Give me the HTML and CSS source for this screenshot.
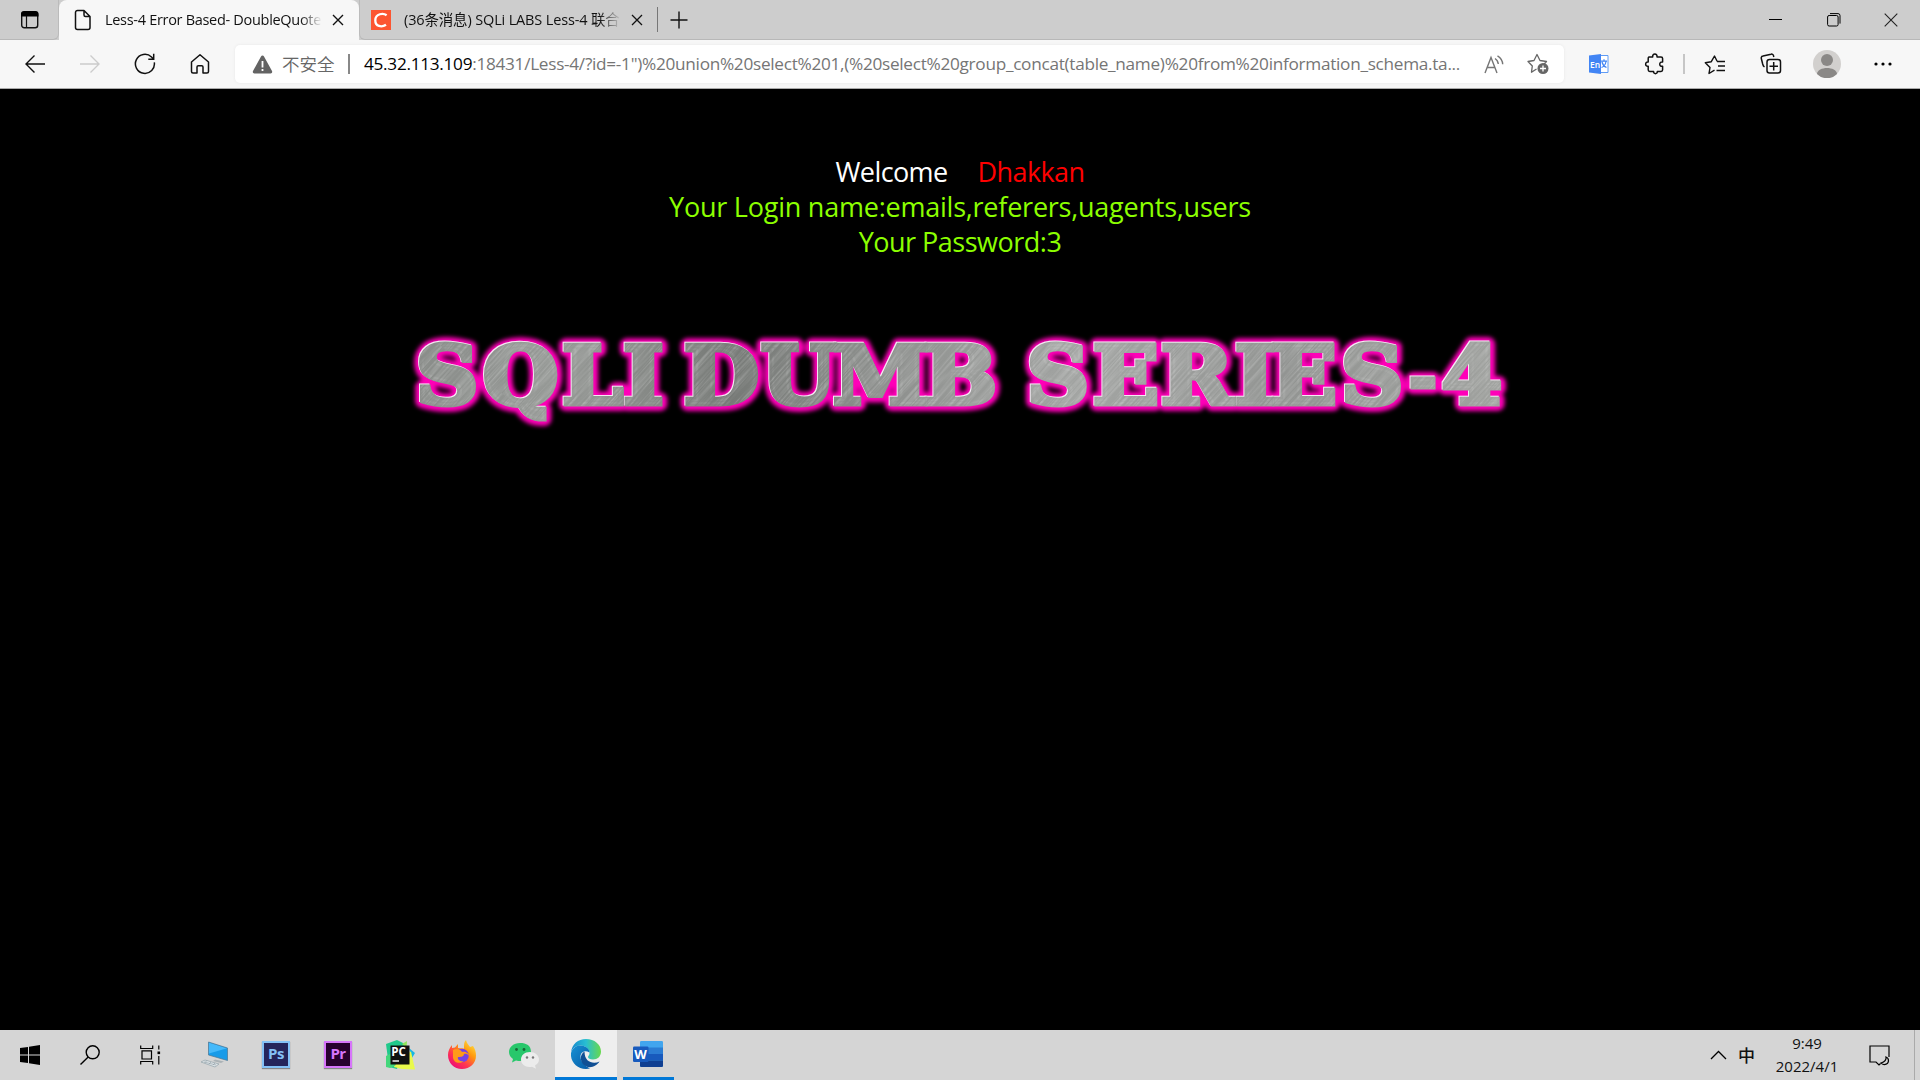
FILE: index.html
```html
<!DOCTYPE html>
<html lang="zh-CN">
<head>
<meta charset="utf-8">
<title>Less-4 Error Based- DoubleQuotes String</title>
<link rel="stylesheet" href="styles.css">
</head>
<body>
<div class="screen">
  <header class="tabs">
    <div class="tab-menu">
      <svg width="20" height="20" viewBox="0 0 20 20"><rect x="1.7" y="2.2" width="16" height="15.6" rx="2.5" fill="none" stroke="#111" stroke-width="1.4"/><path d="M1 6.5V4a3 3 0 0 1 3-3h11.500a3 3 0 0 1 3 3v2.500z" fill="#000"/><path d="M6.500 6v12" stroke="#111" stroke-width="1.200"/></svg>
    </div>
    <div class="tab active">
      <svg class="favicon" width="18" height="22" viewBox="0 0 18 22"><path d="M3.500 1.500H10L16 7.500V18.500a2 2 0 0 1-2 2H3.500a2 2 0 0 1-2-2V3.500a2 2 0 0 1 2-2zM10 1.500V6a1.500 1.500 0 0 0 1.500 1.500H16" fill="none" stroke="#111" stroke-width="1.500" stroke-linejoin="round"/></svg>
      <span class="tab-title first">Less-4 Error Based- DoubleQuote</span>
      <svg class="close" width="12" height="12" viewBox="0 0 12 12"><path d="M1 1l10 10M11 1L1 11" stroke="#111" stroke-width="1.400"/></svg>
    </div>
    <div class="tab inactive">
      <span class="c-logo"><svg width="20" height="20" viewBox="0 0 20 20"><rect width="20" height="20" fill="#fc5531"/><path d="M15.600 5.200C12.500 3 4.500 3.200 4.300 10.200c-.1 6.500 6.500 7.300 10.700 4.600" fill="none" stroke="#fff" stroke-width="2.300"/></svg></span>
      <span class="tab-title second">(36条消息) SQLi LABS Less-4 联合</span>
      <svg class="close" width="12" height="12" viewBox="0 0 12 12"><path d="M1 1l10 10M11 1L1 11" stroke="#111" stroke-width="1.300"/></svg>
    </div>
    <div class="new-tab"><svg width="18" height="18" viewBox="0 0 18 18"><path d="M9 .5v17M.5 9h17" stroke="#111" stroke-width="1.400"/></svg></div>
    <div class="win-controls">
      <span><svg width="14" height="14"><path d="M0 6.500h13" stroke="#000"/></svg></span>
      <span><svg width="14" height="14" viewBox="0 0 14 14" fill="none" stroke="#000"><rect x=".6" y="2.500" width="10.500" height="10.500" rx="1.500"/><path d="M3 .6h8a2 2 0 0 1 2 2v8"/></svg></span>
      <span><svg width="14" height="14" viewBox="0 0 14 14"><path d="M.7.7l12.600 12.600M13.300.7L.7 13.300" stroke="#222" stroke-width="1.100"/></svg></span>
    </div>
  </header>

  <nav class="toolbar">
    <span class="tool"><svg width="22" height="20" viewBox="0 0 22 20" fill="none" stroke="#111" stroke-width="1.400"><path d="M21 10H2M10.500 1.500L2 10l8.500 8.500"/></svg></span>
    <span class="tool"><svg width="22" height="20" viewBox="0 0 22 20" fill="none" stroke="#ccc" stroke-width="1.400"><path d="M1 10h19M11.500 1.500L20 10l-8.500 8.500"/></svg></span>
    <span class="tool"><svg width="22" height="22" viewBox="0 0 22 22" fill="none" stroke="#111" stroke-width="1.500"><path d="M20.300 9.300A9.500 9.500 0 1 1 17.500 4l2 2M19.700.8v5.400h-5.400"/></svg></span>
    <span class="tool"><svg width="20" height="22" viewBox="0 0 20 22" fill="none" stroke="#111" stroke-width="1.500" stroke-linejoin="round"><path d="M1.500 9L10 1.800 18.500 9v9.500a1.500 1.500 0 0 1-1.500 1.500h-4v-6a1.300 1.300 0 0 0-1.300-1.300H8.300A1.300 1.300 0 0 0 7 14v6H3a1.500 1.500 0 0 1-1.500-1.500z"/></svg></span>
    <div class="address">
      <svg class="warn" width="21" height="19" viewBox="0 0 21 19"><path d="M9 1.500a1.700 1.700 0 0 1 3 0l8 14.500a1.700 1.700 0 0 1-1.500 2.500h-16A1.700 1.700 0 0 1 1 16z" fill="#636363"/><path d="M10.500 6v6.500M10.500 14v2" stroke="#fff" stroke-width="1.800"/></svg>
      <span class="unsafe">不安全</span>
      <span class="bar"></span>
      <span class="url"><b>45.32.113.109</b>:18431/Less-4/?id=-1")%20union%20select%201,(%20select%20group_concat(table_name)%20from%20information_schema.ta...</span>
      <svg class="read" width="20" height="19" viewBox="0 0 20 19" fill="none" stroke="#767676" stroke-width="1.400"><path d="M1 18L7 2.500 13 18M3.200 12.500h7.600M11 3.500q3 2 3.300 5.500M13.500.8q5 3 5.200 8.500"/></svg>
      <svg class="fav" width="22" height="22" viewBox="0 0 22 22"><path d="M9.500 16L4.500 19.200 5.300 13 1 8.500l6-1L10 1.500l3 6 6.500 1-2.500 2.700" fill="none" stroke="#666" stroke-width="1.300" stroke-linejoin="round"/><circle cx="16" cy="15.500" r="5.500" fill="#666"/><path d="M16 12.500v6M13 15.500h6" stroke="#fff" stroke-width="1.300"/></svg>
    </div>
    <span class="tool right en"><svg width="20" height="20" viewBox="0 0 20 20"><path d="M10 1.500h9v17h-9" fill="#fff" stroke="#5f9bf5"/><path d="M0 1.500L12 0v20L0 18.500z" fill="#4285f4"/><text x="1" y="13.500" class="en-text">En</text><path d="M12 7.200h6M15 5.300v2M17 7.500c-.5 3-2 5-4.500 6M13 8c.7 3 2 4.500 4.500 5.500" fill="none" stroke="#4285f4" stroke-width="1.200"/></svg></span>
    <span class="tool right"><svg width="22" height="22" viewBox="0 0 22 22"><path d="M5 4h3.700c-.7-4 5-4 4.300 0h4a1.600 1.600 0 0 1 1.600 1.600V9c-3.800-.7-3.800 5 0 4.300v3.500a1.600 1.600 0 0 1-1.600 1.600h-3.700c.6 3-4.300 3-3.700 0H5.800a1.600 1.600 0 0 1-1.600-1.600v-3.500c-3.400.6-3.400-4.800 0-4.300V5.600A1.600 1.600 0 0 1 5 4z" fill="none" stroke="#111" stroke-width="1.500" stroke-linejoin="round"/></svg></span>
    <span class="divider"></span>
    <span class="tool right"><svg width="22" height="21" viewBox="0 0 22 21" fill="none" stroke="#111" stroke-width="1.400" stroke-linejoin="round"><path d="M10.500 16.200L5 19.500l1-6L1.300 8.700l6-1L10.500 2l2.600 5.200M13 7.500h8M14 12h7M12.500 16.500H21"/></svg></span>
    <span class="tool right"><svg width="22" height="22" viewBox="0 0 22 22" fill="none" stroke="#111" stroke-width="1.500" stroke-linejoin="round"><path d="M4.500 14C3 13 3 12 2.700 11L1.300 5.500A2 2 0 0 1 3 3l8-1.800a2 2 0 0 1 2.500 1.400l.3 1.400"/><rect x="7" y="6.500" width="13.500" height="13.500" rx="2.500"/><path d="M13.700 9v8.500M9.500 13.300h8.500"/></svg></span>
    <span class="tool right"><svg width="28" height="28" viewBox="0 0 28 28"><circle cx="14" cy="14" r="14" fill="#d2d0ce"/><circle cx="14" cy="10" r="6" fill="#8a8886"/><path d="M4 24c.5-8 19.500-8 20 0a14 14 0 0 1-20 0z" fill="#8a8886"/></svg></span>
    <span class="tool right"><svg width="18" height="4" viewBox="0 0 18 4"><circle cx="2" cy="2" r="1.600"/><circle cx="9" cy="2" r="1.600"/><circle cx="16" cy="2" r="1.600"/></svg></span>
  </nav>

  <main class="page">
    <div class="welcome"><span class="hello">Welcome</span><span class="name">Dhakkan</span></div>
    <div class="login">Your Login name:emails,referers,uagents,users</div>
    <div class="password">Your Password:3</div>
    <svg class="logo" width="1120" height="120" viewBox="400 320 1120 120">
      <defs>
        <linearGradient id="metal" gradientUnits="userSpaceOnUse" x1="388" y1="0" x2="1406" y2="0">
          <stop offset="0" stop-color="#898c89"/><stop offset=".13" stop-color="#969996"/><stop offset=".29" stop-color="#777a77"/><stop offset=".5" stop-color="#979997"/><stop offset=".62" stop-color="#a2a4a2"/><stop offset=".8" stop-color="#929492"/><stop offset="1" stop-color="#a0a29f"/>
        </linearGradient>
        <filter id="glow" x="-5%" y="-30%" width="110%" height="160%"><feGaussianBlur stdDeviation="2"/></filter>
        <filter id="brushed" filterUnits="userSpaceOnUse" x="0" y="0" width="1100" height="300"><feTurbulence type="fractalNoise" baseFrequency=".018 .6" numOctaves="2" seed="4"/><feColorMatrix values="0 0 0 0 1  0 0 0 0 1  0 0 0 0 1  1.600 0 0 0 -.6"/></filter>
        <pattern id="streaks" patternUnits="userSpaceOnUse" width="1100" height="300" patternTransform="rotate(-50)"><rect width="1100" height="300" filter="url(#brushed)"/></pattern>
      </defs>
      <g class="logo-text">
        <g class="glow" filter="url(#glow)" aria-hidden="true"><use href="#lettering"/></g>
        <g class="shine"><use href="#lettering" x="-1" y="-1"/></g>
        <g class="metal"><text id="lettering" transform="scale(1.07 1)"><tspan y="404" x="388.800 451.500 525.500 582.500">SQLI</tspan> <tspan y="404" x="639.300 711.200 778.500 863.500">DUMB</tspan> <tspan y="404" x="959.500 1021.500 1085 1154.200 1187.900 1253.200">SERIES</tspan><tspan class="hyphen" y="399" x="1317.500">-</tspan><tspan y="404" x="1347.500">4</tspan></text></g>
        <g class="texture"><use href="#lettering"/></g>
      </g>
    </svg>
  </main>

  <footer class="taskbar">
    <span class="sys start"><svg width="20" height="20" viewBox="0 0 20 20"><path d="M0 3l8-1v7.500H0zM9 1.800L20 0v9.500H9zM0 10.500h8V18l-8-1zM9 10.500h11V20L9 18.200z"/></svg></span>
    <span class="sys"><svg width="20" height="20" viewBox="0 0 20 20" fill="none" stroke="#000" stroke-width="1.400"><circle cx="12.700" cy="7.300" r="6.500"/><path d="M8.200 12L.5 19.500"/></svg></span>
    <span class="sys"><svg width="21" height="20" viewBox="0 0 21 20" fill="none" stroke="#000" stroke-width="1.200"><path d="M.7.5v3h12v-3M.7 19.500v-3h12v3M2 5.800h9.500v8.200H2zM18.800.5v4M18.800 11v8.500"/><rect x="17.500" y="6.500" width="2.600" height="2.600" fill="#000" stroke="none"/></svg></span>
    <span class="app pc"><svg width="28" height="28" viewBox="0 0 28 28"><path d="M8.500 1l19 6v12.500L8.500 14z" fill="#189be8"/><path d="M9 1.500l18 5.800L9 12.500z" fill="#45b9fa"/><path d="M8.500 1l19 6v12.500L8.500 14z" fill="none" stroke="#4f7590" stroke-width=".7"/><path d="M15 18.500l9 2-3 1.500-8-2z" fill="#aab2b6"/><path d="M1 21l4-2 14 4-4 3z" fill="#dfe5e8" stroke="#99a8af" stroke-width=".8"/><path d="M4 21l12 3M7 19.500l-2 2M11 21l-2 2M15 22l-2 2" stroke="#8b9ba3" stroke-width=".6"/></svg></span>
    <span class="app"><span class="adobe ps">Ps</span></span>
    <span class="app"><span class="adobe pr">Pr</span></span>
    <span class="app"><svg width="30" height="30" viewBox="0 0 30 30"><path d="M1 4L12 0l8 4-8 25-8-2z" fill="#20c98b"/><path d="M17 4l5-3-.5 7z" fill="#92e65c"/><path d="M24 8l6 5-3 5z" fill="#17b7e5"/><path d="M10 24l-1 3 8 2 13 .5-4-18-6 3z" fill="#e9f94b"/><path d="M1 16l4-2 6 11-6 3-4-1z" fill="#43d77b"/><rect x="5.500" y="5.500" width="19" height="19" fill="#111"/><text x="6.300" y="16" class="pc-text">PC</text><path d="M7.500 21h6.500" stroke="#fff" stroke-width="1.400"/></svg></span>
    <span class="app"><svg width="30" height="30" viewBox="0 0 30 30"><defs><linearGradient id="fox" x1="1" y1="0" x2=".2" y2="1"><stop stop-color="#fff44f"/><stop offset=".4" stop-color="#ff980e"/><stop offset=".7" stop-color="#ff3750"/><stop offset="1" stop-color="#eb0878"/></linearGradient></defs><path d="M19 0c1 4 3 5 4 7l3-1c2 3 3 6 3 9.500C29 23.500 23 29 15 29S1 23 1 15c0-4 1.500-7 4-10v3c1 0 2-.5 3-.5l3-3.500v4l6 .5c0-4 0-7 2-8.500z" fill="url(#fox)"/><circle cx="15" cy="15.500" r="6.800" fill="#7542e5"/><path d="M6 10c3-2 8-.5 9 2 3-1 7 1 7 4-2-3-4-2-5-2 0 3-4 3-6 3-1 3 3 5 6 4-5 4-11 1-11-4z" fill="#ff9a19"/></svg></span>
    <span class="app"><svg width="32" height="28" viewBox="0 0 32 28"><path d="M12 2C5.500 2 1 6 1 11c0 3 1.500 5.300 4 7l-1 3.500 4-2c8 2 15-2 15-8.500S18.500 2 12 2z" fill="#28c76b"/><circle cx="8.500" cy="8.500" r="1.400" fill="#176637"/><circle cx="16" cy="8.500" r="1.400" fill="#176637"/><path d="M22 11c-5.500 0-9 3.500-9 7.500 0 5 5 8.500 11 7.200l4 2-1-3.200c2.500-1.500 4-3.500 4-6 0-4-4-7.500-9-7.500z" fill="#ececec"/><circle cx="19" cy="16.500" r="1.200" fill="#777"/><circle cx="25" cy="16.500" r="1.200" fill="#777"/></svg></span>
    <span class="app current"><svg width="30" height="30" viewBox="0 0 30 30"><defs><linearGradient id="wave"><stop stop-color="#1689ce"/><stop offset=".5" stop-color="#28bed2"/><stop offset="1" stop-color="#67d94c"/></linearGradient><linearGradient id="sea" x2="1" y2="1"><stop stop-color="#1792d4"/><stop offset="1" stop-color="#0659a6"/></linearGradient></defs><path d="M0 13.500C1 5 7 0 15 0c8.500 0 15 5.500 15 12.500 0 5-3.500 8-8 8-3 0-5-1-5-2.500 0-1 1.500-1.500 1.500-4C18.500 10 14 6.500 9 6.500c-4.500 0-7.500 3-9 7z" fill="url(#wave)"/><path d="M0 14c1.500-5 5-7.500 9-7.500 5 0 9.500 3 9.500 7-5-3-9 0-9 4 0 6 5 9.500 9.500 12C8 32-1 24 0 14z" fill="url(#sea)"/><path d="M13.500 12.500C8 16 9 24 14.500 27c5 3 11 0 14-4.500-6 3-15 1-15-10z" fill="#104f94"/></svg></span>
    <span class="app word"><svg width="30" height="27" viewBox="0 0 30 27"><rect x="7" width="23" height="26" rx="1.300" fill="#41a5ee"/><path d="M7 6.500h23V13H7z" fill="#2b7cd3"/><path d="M7 13h23v6.500H7z" fill="#185abd"/><path d="M7 19.500h23v5a1.500 1.500 0 0 1-1.500 1.500H8.500A1.500 1.500 0 0 1 7 24.500z" fill="#103f91"/><rect y="5.500" width="15.500" height="15.500" rx="1.300" fill="#185abd"/><text x="1.300" y="17.500" class="word-text">W</text></svg></span>
    <div class="tray">
      <svg class="chevron" width="17" height="10" viewBox="0 0 17 10"><path d="M1 9l7.500-7.500L16 9" fill="none" stroke="#000" stroke-width="1.300"/></svg>
      <span class="ime">中</span>
      <div class="clock"><span>9:49</span><span>2022/4/1</span></div>
      <svg class="notice" width="21" height="21" viewBox="0 0 21 21" fill="none" stroke="#000" stroke-width="1.200"><path d="M20 12V1H1v16h6l3 3 1.500-1.500M17 12c.5 3-1.500 5-5 6 2 2.500 7 2 7.500-2 .1-2-1-3.500-2.500-4z"/></svg>
      <span class="desktop"></span>
    </div>
  </footer>
</div>
</body>
</html>
```
FILE: styles.css
```css
* { box-sizing: border-box; }
body { margin: 0; background: #000; font-family: "Open Sans", "Noto Sans CJK SC", sans-serif; color: #111; }
svg { display: block; flex: none; }
.screen { width: 1920px; height: 1080px; display: flex; flex-direction: column; overflow: hidden; }

.tabs { height: 40px; display: flex; background: #cdcdcd; }
.tab-menu { width: 59px; display: flex; align-items: center; justify-content: center; padding-left: 2px; border-bottom: 1px solid #b8b8b8; border-right: 1px solid #bbb; border-radius: 0 0 6px; }
.tab { display: flex; align-items: center; }
.active { width: 300px; background: #f7f7f7; border-radius: 8px 8px 0 0; padding-left: 15px; }
.inactive { width: 299px; padding-left: 11px; border-bottom: 1px solid #b8b8b8; border-left: 1px solid #bbb; border-radius: 0 0 0 6px; }
.tab-title { overflow: hidden; white-space: nowrap; font-size: 14.500px; line-height: 24px; height: 24px; color: #111; }
.first { width: 217px; margin-left: 13px; letter-spacing: -.3px; -webkit-mask-image: linear-gradient(90deg, #000 90%, transparent); }
.second { width: 217px; margin-left: 13px; letter-spacing: -.15px; -webkit-mask-image: linear-gradient(90deg, #000 90%, transparent); }
.close { margin-left: 10px; }
.new-tab { flex: 1; display: flex; align-items: center; padding-left: 12px; border-bottom: 1px solid #b8b8b8; }
.new-tab::before { content: ""; width: 1px; height: 25px; background: #777; margin-left: -13px; margin-right: 12px; }
.win-controls { display: flex; border-bottom: 1px solid #b8b8b8; }
.win-controls span { width: 57.500px; display: flex; align-items: center; justify-content: center; }

.toolbar { height: 49px; display: flex; align-items: center; background: #f7f7f7; border-bottom: 1px solid #aaa; padding-left: 7.500px; }
.tool { width: 55px; display: flex; justify-content: center; align-items: center; }
.address { width: 1329px; height: 38px; margin-left: 7.500px; display: flex; align-items: center; background: #fff; border-radius: 5px; box-shadow: 0 0 3px #e6e6e6; padding-left: 17px; }
.unsafe { width: 53px; margin-left: 9px; padding-bottom: 2px; font-size: 17.500px; color: #666; white-space: nowrap; font-weight: 350; }
.bar { width: 2px; height: 20px; margin-left: 13px; background: #888; }
.url { width: 1099px; margin-left: 14px; padding-bottom: 2px; white-space: nowrap; font-size: 17.200px; letter-spacing: -.28px; color: #757575; }
.url b { font-weight: 400; color: #000; }
.read { margin-left: 21px; }
.fav { margin-left: 23px; }
.right { width: 56px; }
.en { margin-left: 7px; }
.en-text { font: 600 8.500px "Open Sans", sans-serif; fill: #fff; }
.divider { width: 2px; height: 20px; margin: 0 2px 0 0; background: #c6c6c6; }

.page { flex: 1; display: flex; flex-direction: column; align-items: center; padding-top: 65px; font-size: 27px; line-height: 35px; letter-spacing: -.23px; background: #000; white-space: nowrap; }
.welcome { display: flex; gap: 30px; }
.hello { color: #fff; letter-spacing: -.6px; }
.name { color: #f00; letter-spacing: -.6px; }
.login, .password { color: #8cff00; }
.password { letter-spacing: -.5px; }
.logo { margin-top: 61px; }
.logo-text { font: 700 81px "DejaVu Serif", serif; letter-spacing: 0; stroke-linejoin: round; }
.hyphen { font-size: 60px; }
.glow { fill: #ff00b8; stroke: #ff00b8; stroke-width: 14px; }
.shine { fill: #f5e9f3; stroke: #f5e9f3; stroke-width: 5px; stroke-linejoin: miter; }
.metal { fill: url(#metal); stroke: url(#metal); stroke-width: 5px; stroke-linejoin: miter; }
.texture { fill: url(#streaks); stroke: url(#streaks); stroke-width: 4px; opacity: .3; }

.taskbar { height: 50px; display: flex; background: #d5d5d5; }
.sys { width: 61px; display: flex; align-items: center; justify-content: center; }
.start { width: 59px; }
.app { width: 62px; display: flex; align-items: center; justify-content: center; padding-bottom: 1px; }
.pc { margin-left: 2px; }
.adobe { width: 28px; height: 27px; border: 2px solid; text-align: center; font-size: 15px; line-height: 21px; font-weight: 700; letter-spacing: -.5px; box-shadow: 0 1px 1px #888; }
.ps { color: #84c1f6; background: #25255b; }
.pr { color: #d675fa; background: #27002e; }
.pc-text { font: 700 11.500px "Open Sans", sans-serif; fill: #fff; }
.current { background: #eee; border-bottom: 3px solid #0078d7; padding-top: 2px; }
.word { width: 51px; margin-left: 6px; border-bottom: 3px solid #0078d7; padding: 2px 2px 0 0; }
.word-text { font: 700 13px "Open Sans", sans-serif; fill: #fff; }
.tray { margin-left: auto; display: flex; align-items: center; }
.ime { width: 18px; margin-left: 11px; padding-bottom: 2px; font: 500 17px "Noto Sans CJK SC", sans-serif; }
.clock { width: 70px; margin-left: 16px; display: flex; flex-direction: column; align-items: center; font-size: 15px; line-height: 23px; padding-bottom: 1px; }
.notice { margin-left: 27px; }
.desktop { width: 6px; height: 50px; margin-left: 24px; border-left: 1px solid #aaa; }
```
